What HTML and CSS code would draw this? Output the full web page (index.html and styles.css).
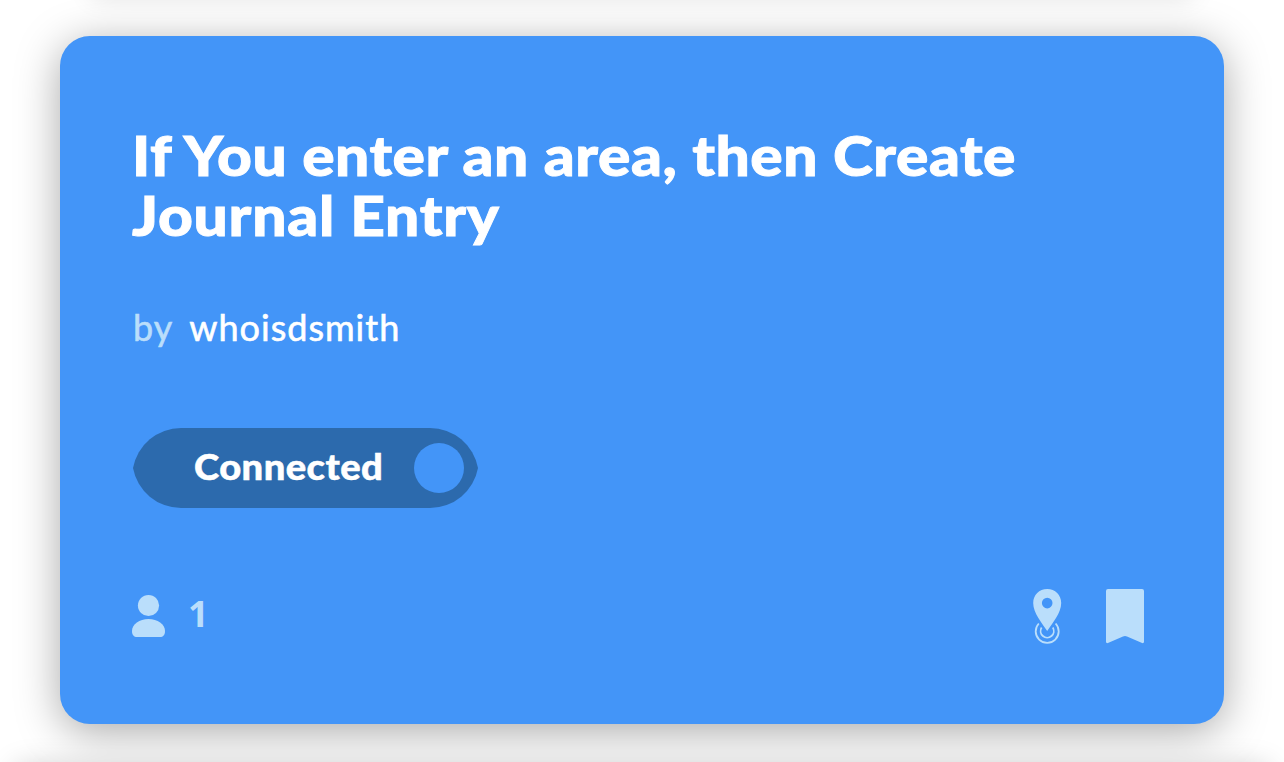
FILE: index.html
```html
<!DOCTYPE html>
<html lang="en">
<head>
<meta charset="utf-8">
<title>Applets</title>
<link rel="stylesheet" href="styles.css">
</head>
<body>
<main class="feed">
  <div class="neighbor neighbor-top"></div>
  <article class="card">
    <h1 class="title"><span class="line line-one">If You enter an area, then Create</span> <span class="line line-two">Journal Entry</span></h1>
    <p class="author"><span class="by">by</span><span class="name">whoisdsmith</span></p>
    <div class="toggle"><span class="label">Connected</span><span class="knob"></span></div>
    <footer class="meta">
      <svg class="user" width="34" height="44" viewBox="0 0 34 44"><circle cx="16.5" cy="11.5" r="10.6"/><path d="M0 37C0 30 7.500 25 16.500 25S33 30 33 37C33 41 31 43 28 43H5C2 43 0 41 0 37Z"/></svg>
      <span class="count">1</span>
      <svg class="pin" width="30" height="56" viewBox="0 0 30 56"><path fill-rule="evenodd" d="M15.200 1C7.200 1 1.200 7 1.200 15C1.200 25 10 35 15.200 43C20.400 35 29.200 25 29.200 15C29.200 7 23.200 1 15.200 1ZM15.200 9.800A5.300 5.300 0 1 1 15.200 20.400A5.300 5.300 0 1 1 15.200 9.800Z"/><path class="ring" d="M6.800 35.500A11.500 11.500 0 1 0 23.600 35.500M9.600 39.500A6.600 6.600 0 1 0 20.800 39.500"/></svg>
      <svg class="bookmark" width="38" height="56" viewBox="0 0 38 56"><path d="M2 1H36Q38 1 38 3V53.500Q38 56 35.500 54.800L21 48.500Q19 47.600 17 48.500L2.500 54.800Q0 56 0 53.500V3Q0 1 2 1Z"/></svg>
    </footer>
  </article>
  <div class="neighbor neighbor-bottom"></div>
</main>
</body>
</html>
```
FILE: styles.css
```css
* { box-sizing: border-box; }
body { margin: 0; background: #fff; font-family: Lato, "Open Sans", sans-serif; }
.feed { height: 762px; overflow: hidden; display: flex; flex-direction: column; align-items: center; }
.neighbor { width: 1164px; flex: none; }
.neighbor-top { width: 1100px; height: 20px; margin-top: -26px; margin-bottom: 42px; box-shadow: 0 2px 26px rgba(0,0,0,.14); }
.neighbor-bottom { width: 1250px; height: 60px; margin-top: 44px; box-shadow: 0 0 30px rgba(0,0,0,.22); }
.card {
  width: 1164px; height: 688px; flex: none;
  padding: 89px 80px 79px 72px;
  display: flex; flex-direction: column;
  background: #4395f8; border-radius: 30px;
  box-shadow: 0 8px 44px rgba(0,0,0,.34);
  color: #fff;
}
.title { margin: 0; font-size: 56px; line-height: 60px; font-weight: 900; -webkit-text-stroke: .9px currentColor; }
.line { display: block; width: max-content; white-space: nowrap; transform: scaleX(1.08); transform-origin: left; }
.line-one { letter-spacing: .5px; }
.line-two { letter-spacing: .7px; }
.author { margin: 52px 0 0 1px; height: 60px; line-height: 60px; font-size: 36px; display: flex; gap: 16px; letter-spacing: 1px; -webkit-text-stroke: .6px currentColor; }
.by { color: #badefb; }
.toggle {
  width: 345px; height: 80px; margin: 71px 0 0 1px; padding: 0 14px 0 61px;
  display: flex; align-items: center; justify-content: space-between;
  background: #2c6aad;
  clip-path: path("M48 0H297A48.8 48.8 0 0 1 345 40A48.8 48.8 0 0 1 297 80H48A48.8 48.8 0 0 1 0 40A48.8 48.8 0 0 1 48 0Z");
}
.label { font-size: 36px; font-weight: 900; line-height: 60px; letter-spacing: .4px; padding-bottom: 4px; -webkit-text-stroke: .5px currentColor; transform: scaleX(1.06); transform-origin: left; }
.knob { width: 50px; height: 50px; border-radius: 50%; background: #4395f8; }
.meta { margin-top: 80px; height: 56px; display: flex; align-items: center; color: #badefb; }
.meta svg { fill: currentColor; flex: none; }
.count { margin-left: 22px; padding-bottom: 4px; font-family: "Open Sans", "Noto Sans", sans-serif; font-size: 36px; line-height: 52px; font-weight: 700; }
.pin { margin-left: auto; }
.pin .ring { fill: none; stroke: currentColor; stroke-width: 1.8; }
.bookmark { margin-left: 44px; }
```
